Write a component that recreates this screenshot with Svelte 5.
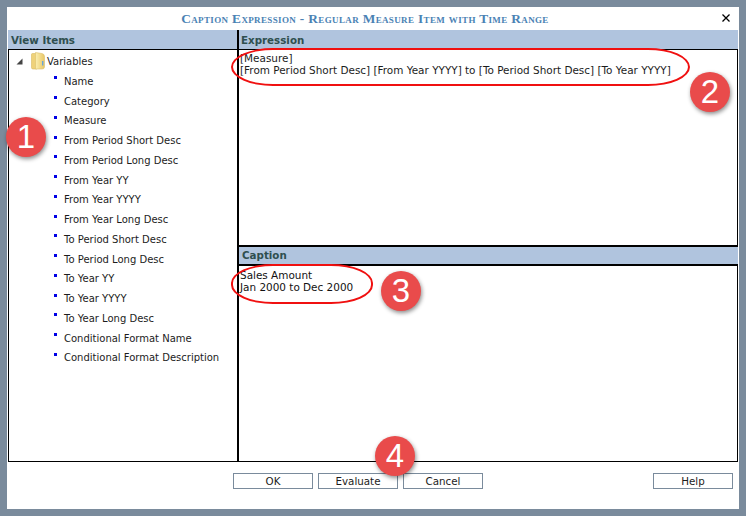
<script>
  // tree leaves under the Variables folder
  const variables = [
    "Name",
    "Category",
    "Measure",
    "From Period Short Desc",
    "From Period Long Desc",
    "From Year YY",
    "From Year YYYY",
    "From Year Long Desc",
    "To Period Short Desc",
    "To Period Long Desc",
    "To Year YY",
    "To Year YYYY",
    "To Year Long Desc",
    "Conditional Format Name",
    "Conditional Format Description",
  ];

  const badges = [
    { n: 1, x: 6, y: 117 },
    { n: 2, x: 690, y: 72 },
    { n: 3, x: 381, y: 271 },
    { n: 4, x: 375, y: 436 },
  ];

  const rings = [
    { x: 231, y: 48, w: 459, h: 38 },
    { x: 231, y: 264, w: 142, h: 40 },
  ];
</script>

<div class="page">
  <div class="dialog">
    <div class="title">
      <h1>Caption Expression - Regular Measure Item with Time Range</h1>
      <svg class="close" width="10" height="10" viewBox="0 0 10 10">
        <path d="M1.5 1.5 L8.5 8.5 M8.5 1.5 L1.5 8.5" stroke="#000" stroke-width="1.3" fill="none" />
      </svg>
    </div>

    <div class="panes">
      <section class="left">
        <header class="head">View Items</header>
        <div class="tree">
          <div class="root">
            <svg class="arrow" width="7" height="7" viewBox="0 0 7 7">
              <path d="M6.5 0.5 V6.5 H0.5 Z" fill="#444" />
            </svg>
            <svg class="folder" width="14" height="18" viewBox="0 0 14 18">
              <defs>
                <linearGradient id="leaf" x1="0" y1="0" x2="1" y2="0">
                  <stop offset="0" stop-color="#fbeeb0" />
                  <stop offset="1" stop-color="#e8c768" />
                </linearGradient>
              </defs>
              <path d="M0.5 2.5 Q0.5 1.5 1.5 1.5 H6 V17 H2 Q0.5 17 0.5 15.5 Z" fill="#efd27a" stroke="#d8b95f" stroke-width="0.6" />
              <path d="M4.5 0.5 L11 1.5 Q13.5 2 13.5 4.5 V15 Q13.5 17 11 17 L4.5 17 Z" fill="url(#leaf)" stroke="#dcc06c" stroke-width="0.6" />
              <rect x="11" y="9" width="1.4" height="4.5" fill="#6aa5d8" />
            </svg>
            <span>Variables</span>
          </div>
          <ul>
            {#each variables as name}
              <li><i></i><span>{name}</span></li>
            {/each}
          </ul>
        </div>
      </section>

      <section class="right">
        <header class="head expression-head">Expression</header>
        <div class="text expression">[Measure]<br />[From Period Short Desc] [From Year YYYY] to [To Period Short Desc] [To Year YYYY]</div>
        <header class="head caption-head">Caption</header>
        <div class="text caption">Sales Amount<br />Jan 2000 to Dec 2000</div>
      </section>
    </div>

    <footer>
      <div class="main-buttons">
        <button>OK</button>
        <button>Evaluate</button>
        <button>Cancel</button>
      </div>
      <button class="help">Help</button>
    </footer>
  </div>

  {#each rings as r}
    <div class="ring" style="left:{r.x}px;top:{r.y}px;width:{r.w}px;height:{r.h}px"></div>
  {/each}
  {#each badges as b}
    <div class="badge" style="left:{b.x}px;top:{b.y}px">{b.n}</div>
  {/each}
</div>

<style>
  :global(body) {
    margin: 0;
    background: #7a8b9c;
  }

  .page {
    position: relative;
    width: 746px;
    height: 516px;
    box-sizing: border-box;
    padding: 7px;
    background: #7a8b9c;
    font-family: "DejaVu Sans", sans-serif;
    font-size: 10px;
    color: #1c1c1c;
    overflow: hidden;
  }

  .dialog {
    display: flex;
    flex-direction: column;
    height: 502px;
    background: #fff;
  }

  .title {
    position: relative;
    display: flex;
    align-items: center;
    justify-content: center;
    height: 23px;
    padding-right: 16px;
    flex: none;
  }

  h1 {
    margin: 0;
    font-family: "Liberation Serif", serif;
    font-variant: small-caps;
    font-size: 13.35px;
    letter-spacing: 0.36px;
    font-weight: bold;
    color: #4a82b4;
  }

  .close {
    position: absolute;
    right: 8px;
    top: 6px;
  }

  .panes {
    display: flex;
    height: 431px;
    flex: none;
    margin: 0 1px;
    border-bottom: 1px solid #000;
  }

  .head {
    height: 20px;
    box-sizing: border-box;
    padding: 4px 3px 0;
    background: #b0c4de;
    border-bottom: 1px solid #000;
    font-size: 10.3px;
    font-weight: bold;
    color: #2f4f4f;
    line-height: 13px;
  }

  .expression-head {
    padding-left: 2px;
  }

  .left {
    width: 229px;
    flex: none;
    display: flex;
    flex-direction: column;
  }

  .tree {
    flex: 1;
    border-left: 1px solid #000;
    padding-top: 2px;
  }

  .root {
    display: flex;
    align-items: center;
    height: 18px;
    padding-left: 7px;
  }

  .arrow {
    margin-right: 8px;
  }

  .folder {
    margin-right: 2px;
  }

  ul {
    margin: 0;
    padding: 0;
    list-style: none;
  }

  li {
    display: flex;
    height: 19.75px;
    padding-left: 45px;
    align-items: center;
    box-sizing: border-box;
  }

  li:first-child {
    margin-top: 1.6px;
  }

  li i {
    width: 3px;
    height: 3px;
    background: #0000e6;
    margin: -7px 7px 0 0;
  }

  .right {
    flex: 1;
    display: flex;
    flex-direction: column;
    border-left: 2px solid #000;
  }

  .text {
    padding: 2px 1px;
    line-height: 12px;
    font-size: 10.45px;
    border-right: 1px solid #000;
  }

  .expression {
    height: 195px;
    box-sizing: border-box;
  }

  .caption-head {
    height: 21px;
    padding-top: 2px;
    border-top: 2px solid #000;
    border-bottom: 2px solid #000;
  }

  .caption {
    flex: 1;
    padding-top: 3px;
    color: #111;
  }

  footer {
    display: flex;
    justify-content: space-between;
    padding: 11px 6px 0 226px;
  }

  .main-buttons {
    display: flex;
    gap: 5px;
  }

  button {
    width: 80px;
    height: 16px;
    box-sizing: border-box;
    padding: 0;
    background: #fff;
    border: 1px solid #7a8b9c;
    border-radius: 0;
    font-family: inherit;
    font-size: 10.3px;
    line-height: 14px;
    color: #1c1c1c;
  }

  .ring {
    position: absolute;
    box-sizing: border-box;
    border: 2px solid #f01010;
    border-radius: 42px / 19px;
  }

  .badge {
    position: absolute;
    width: 40px;
    height: 40px;
    border-radius: 50%;
    background: #e94b4b;
    box-shadow: 1px 2px 4px rgba(0, 0, 0, 0.45);
    color: #fff;
    font-family: "Liberation Sans", sans-serif;
    font-size: 33px;
    line-height: 40px;
    text-align: center;
  }
</style>
